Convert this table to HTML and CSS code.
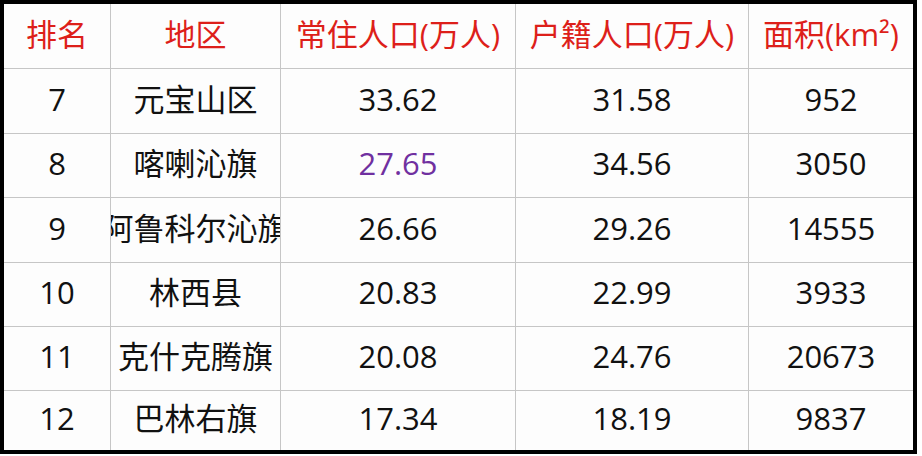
FILE: index.html
```html
<!DOCTYPE html>
<html lang="zh">
<head>
<meta charset="utf-8">
<link rel="stylesheet" href="styles.css">
</head>
<body>
<div class="table">
  <div class="cell head">排名</div>
  <div class="cell head">地区</div>
  <div class="cell head">常住人口(万人)</div>
  <div class="cell head">户籍人口(万人)</div>
  <div class="cell head">面积(km²)</div>

  <div class="cell">7</div>
  <div class="cell">元宝山区</div>
  <div class="cell">33.62</div>
  <div class="cell">31.58</div>
  <div class="cell">952</div>

  <div class="cell">8</div>
  <div class="cell">喀喇沁旗</div>
  <div class="cell purple">27.65</div>
  <div class="cell">34.56</div>
  <div class="cell">3050</div>

  <div class="cell">9</div>
  <div class="cell"><span>阿鲁科尔沁旗</span></div>
  <div class="cell">26.66</div>
  <div class="cell">29.26</div>
  <div class="cell">14555</div>

  <div class="cell">10</div>
  <div class="cell">林西县</div>
  <div class="cell">20.83</div>
  <div class="cell">22.99</div>
  <div class="cell">3933</div>

  <div class="cell">11</div>
  <div class="cell">克什克腾旗</div>
  <div class="cell">20.08</div>
  <div class="cell">24.76</div>
  <div class="cell">20673</div>

  <div class="cell">12</div>
  <div class="cell">巴林右旗</div>
  <div class="cell">17.34</div>
  <div class="cell">18.19</div>
  <div class="cell">9837</div>
</div>
</body>
</html>
```

FILE: styles.css
```css
html, body {
  margin: 0;
  padding: 0;
  background: #ffffff;
}
.table {
  width: 909px;
  height: 446px;
  border: 4px solid #000;
  display: grid;
  grid-template-columns: 106px 169px 234px 232px 164px;
  grid-template-rows: 64px 64px 63px 64px 63px 63px 59px;
  gap: 1px;
  background: #c6c6c6;
  font-family: "Open Sans", "Noto Sans CJK SC", sans-serif;
  font-size: 31px;
  color: #111;
}
.cell {
  background: #fdfdfd;
  display: flex;
  align-items: center;
  justify-content: center;
  overflow: hidden;
  white-space: nowrap;
  line-height: 1;
  padding-bottom: 4px;
}
.cell span {
  flex: none;
}
.head {
  color: #dd1f1a;
}
.purple {
  color: #7030a0;
}
```
